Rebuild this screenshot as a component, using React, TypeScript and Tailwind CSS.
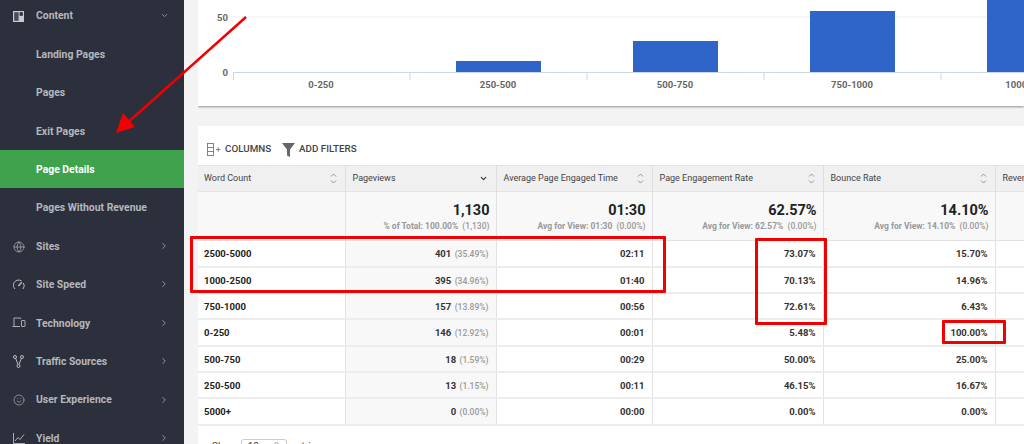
import React from "react";
import { ChevronDown, ChevronRight, Globe, Smile } from "lucide-react";

const FONT = { fontFamily: "Roboto, sans-serif" };

type NavItem = { label: string; icon?: React.ReactNode; open?: boolean; active?: boolean; arrow?: boolean };

function ContentIcon() {
  return (
    <svg width="11" height="11" viewBox="0 0 11 11">
      <rect width="11" height="11" fill="#c9cbd0" />
      <rect x="1.2" y="1.2" width="4.4" height="8.6" fill="#4a4d58" />
      <rect x="6.6" y="1.2" width="3.2" height="3.6" fill="#2c303c" />
    </svg>
  );
}

function GaugeIcon() {
  return (
    <svg width="12" height="11" viewBox="0 0 12 11" fill="none" stroke="#b9bbc1" strokeWidth="1">
      <path d="M2 10A5.2 5.2 0 0 1 8.6 2M10.4 4A5.2 5.2 0 0 1 10 10" />
      <path d="M5.4 7 8.8 3.2" strokeWidth="1.4" />
    </svg>
  );
}

function DevicesIcon() {
  return (
    <svg width="14" height="12" viewBox="0 0 14 12" fill="none" stroke="#b9bbc1" strokeWidth="0.9">
      <path d="M8.5 2V1H2v8M0.5 9.5H8" />
      <rect x="9.5" y="3.5" width="3.5" height="6" rx="0.5" />
    </svg>
  );
}

function ForkIcon() {
  return (
    <svg width="11" height="13" viewBox="0 0 11 13" fill="none" stroke="#b9bbc1" strokeWidth="1">
      <circle cx="2" cy="2" r="1.5" />
      <circle cx="9" cy="2" r="1.5" />
      <circle cx="5.5" cy="11" r="1.5" />
      <path d="M2.7 3.4 5 9.5M8.3 3.4 6 9.5" />
    </svg>
  );
}

function YieldIcon() {
  return (
    <svg width="12" height="11" viewBox="0 0 12 11" fill="none" stroke="#b9bbc1" strokeWidth="0.9">
      <path d="M0.5 0v10.5H12" />
      <path d="M2 8 5 4.5 7 6.5 11 1.5" />
    </svg>
  );
}

const nav: NavItem[] = [
  { label: "Content", icon: <ContentIcon />, open: true, arrow: true },
  { label: "Landing Pages" },
  { label: "Pages" },
  { label: "Exit Pages" },
  { label: "Page Details", active: true },
  { label: "Pages Without Revenue" },
  { label: "Sites", icon: <Globe size={12} strokeWidth={1.3} />, arrow: true },
  { label: "Site Speed", icon: <GaugeIcon />, arrow: true },
  { label: "Technology", icon: <DevicesIcon />, arrow: true },
  { label: "Traffic Sources", icon: <ForkIcon />, arrow: true },
  { label: "User Experience", icon: <Smile size={12} strokeWidth={1.3} />, arrow: true },
  { label: "Yield", icon: <YieldIcon />, arrow: true },
];

type Row = { name: string; views: string; pct: string; time: string; rate: string; bounce: string };

const rows: Row[] = [
  { name: "2500-5000", views: "401", pct: "(35.49%)", time: "02:11", rate: "73.07%", bounce: "15.70%" },
  { name: "1000-2500", views: "395", pct: "(34.96%)", time: "01:40", rate: "70.13%", bounce: "14.96%" },
  { name: "750-1000", views: "157", pct: "(13.89%)", time: "00:56", rate: "72.61%", bounce: "6.43%" },
  { name: "0-250", views: "146", pct: "(12.92%)", time: "00:01", rate: "5.48%", bounce: "100.00%" },
  { name: "500-750", views: "18", pct: "(1.59%)", time: "00:29", rate: "50.00%", bounce: "25.00%" },
  { name: "250-500", views: "13", pct: "(1.15%)", time: "00:11", rate: "46.15%", bounce: "16.67%" },
  { name: "5000+", views: "0", pct: "(0.00%)", time: "00:00", rate: "0.00%", bounce: "0.00%" },
];

function SortIcon() {
  return (
    <svg width="7" height="11" viewBox="0 0 7 11" fill="none" stroke="#8a8a8a" strokeWidth="0.9" className="shrink-0">
      <path d="M1 3.5 3.5 1 6 3.5M1 7.5 3.5 10 6 7.5" />
    </svg>
  );
}

function Sidebar() {
  return (
    <aside className="w-[184px] shrink-0 bg-[#2c303c]">
      <div className="-mt-[4px]">
        {nav.map((item) => (
          <div
            key={item.label}
            className={`flex h-[38.4px] items-center text-[10.4px] font-bold ${
              item.active ? "bg-[#3fa34d] text-white" : "text-[#b5b7bc]"
            }`}
          >
            <span className="flex w-[36px] shrink-0 items-center justify-center pl-[1px] pt-[2px] text-[#b9bbc1]">{item.icon}</span>
            <span className="flex-1 pt-[2px]">{item.label}</span>
            {item.arrow &&
              (item.open ? (
                <ChevronDown size={9} className="mr-[15px] mt-[1px] text-[#a5a7ad]" />
              ) : (
                <ChevronRight size={10} className="mr-[15px] mt-[1px] text-[#a5a7ad]" />
              ))}
          </div>
        ))}
      </div>
    </aside>
  );
}

function ChartCard() {
  const bars = [
    { x: 258, y: 61, h: 11, w: 85 },
    { x: 435, y: 41, h: 31, w: 85 },
    { x: 612, y: 11, h: 61, w: 85 },
    { x: 789, y: 0, h: 72, w: 85 },
  ];
  const labels = ["0-250", "250-500", "500-750", "750-1000", "1000-2500"];
  return (
    <div className="h-[106px] bg-white shadow-[0_1px_2px_rgba(0,0,0,0.4)]">
      <svg width="826" height="106" style={FONT} className="block">
        <line x1="35" x2="826" y1="17" y2="17" stroke="#e8ecf3" />
        {bars.map((b) => (
          <rect key={b.x} x={b.x} y={b.y} width={b.w} height={b.h} fill="#2f65c9" />
        ))}
        <path d="M35 72.5H826M35.5 72v8M212 72v8M389 72v8M566 72v8M743 72v8" stroke="#ccd6eb" fill="none" />
        <text x="30" y="20.5" textAnchor="end" fontSize="9.5" fontWeight="700" fill="#666">50</text>
        <text x="30" y="75.5" textAnchor="end" fontSize="9.5" fontWeight="700" fill="#666">0</text>
        {labels.map((l, i) => (
          <text key={l} x={123 + i * 177} y="87.5" textAnchor="middle" fontSize="9.5" fontWeight="700" fill="#666">{l}</text>
        ))}
      </svg>
    </div>
  );
}

function HeaderCell({ label, desc, first }: { label: string; desc?: boolean; first?: boolean }) {
  return (
    <th className={`border-r border-[#dedede] pr-[7px] text-left font-normal ${first ? "pl-[6px]" : "pl-[7px]"}`}>
      <div className="flex items-center justify-between whitespace-nowrap pr-[1px]">
        <span>{label}</span>
        {desc ? <ChevronDown size={9} strokeWidth={3} className="text-[#333]" /> : <SortIcon />}
      </div>
    </th>
  );
}

function TotalCell({ big, sub, paren }: { big: string; sub: string; paren: string }) {
  return (
    <td className="border-r border-[#e2e2e2] px-[6px] pt-[3px] text-right align-middle">
      <div className="text-[14.5px] font-bold leading-[18px] text-[#222]">{big}</div>
      <div className="whitespace-nowrap text-[8.5px] font-bold leading-[13px] text-[#999]">
        {sub} <span className="ml-[2px] font-medium">{paren}</span>
      </div>
    </td>
  );
}

function DataTable() {
  return (
    <div className="mt-[20px] bg-white">
      <div className="flex h-[39px] items-center pl-[9px] pt-[8px] text-[9.8px] font-medium text-[#444]">
        <svg width="14" height="13" viewBox="0 0 14 13" fill="none" stroke="#777" strokeWidth="0.9">
          <rect x="0.5" y="0.5" width="6" height="12" />
          <path d="M0.5 4.5h6M0.5 8.5h6M9 6.5h4.5M11.2 4.3v4.4" />
        </svg>
        <span className="ml-[4px]">COLUMNS</span>
        <svg width="13" height="14" viewBox="0 0 13 14" fill="#666" className="ml-[11px]">
          <path d="M0 0h13L8 6.5V14L5 12.5v-6z" />
        </svg>
        <span className="ml-[4px]">ADD FILTERS</span>
      </div>
      <table className="w-[900px] table-fixed border-collapse text-[#333]">
        <colgroup>
          <col className="w-[147px]" />
          <col className="w-[151px]" />
          <col className="w-[156px]" />
          <col className="w-[171px]" />
          <col className="w-[172px]" />
          <col />
        </colgroup>
        <thead>
          <tr className="h-[26px] border-y border-[#e4e4e4] bg-[#f0f0f0] text-[9px] text-[#444]">
            <HeaderCell label="Word Count" first />
            <HeaderCell label="Pageviews" desc />
            <HeaderCell label="Average Page Engaged Time" />
            <HeaderCell label="Page Engagement Rate" />
            <HeaderCell label="Bounce Rate" />
            <th className="px-[7px] text-left font-normal">Revenue</th>
          </tr>
        </thead>
        <tbody>
          <tr className="h-[49px] border-b border-[#e2e2e2] bg-[#f8f8f8]">
            <td className="border-r border-[#e2e2e2]" />
            <TotalCell big="1,130" sub="% of Total: 100.00%" paren="(1,130)" />
            <TotalCell big="01:30" sub="Avg for View: 01:30" paren="(0.00%)" />
            <TotalCell big="62.57%" sub="Avg for View: 62.57%" paren="(0.00%)" />
            <TotalCell big="14.10%" sub="Avg for View: 14.10%" paren="(0.00%)" />
            <td />
          </tr>
          {rows.map((r) => (
            <tr key={r.name} className="h-[26.3px] border-b-2 border-[#ececec] text-[9.5px] font-bold [&>td]:pt-[2px]">
              <td className="border-r border-[#e2e2e2] pl-[6px] pr-[7px] text-[#222]">{r.name}</td>
              <td className="border-r border-[#e2e2e2] bg-[#f8f8f8] px-[7px] text-right">
                {r.views} <span className="ml-[1px] text-[8.5px] font-medium text-[#999]">{r.pct}</span>
              </td>
              <td className="border-r border-[#e2e2e2] px-[7px] text-right">{r.time}</td>
              <td className="border-r border-[#e2e2e2] px-[7px] text-right">{r.rate}</td>
              <td className="border-r border-[#e2e2e2] px-[7px] text-right">{r.bounce}</td>
              <td />
            </tr>
          ))}
        </tbody>
      </table>
      <div className="flex items-start pl-[14px] pt-[13px] text-[10px] text-[#444]">
        <span>Show</span>
        <span className="mx-[4px] flex h-[16px] w-[46px] items-center justify-between rounded-[3px] border border-[#ccc] px-[6px]">
          10 <SortIcon />
        </span>
        <span>entries</span>
      </div>
    </div>
  );
}

function Annotations() {
  return (
    <>
      <div className="absolute left-[190px] top-[236px] h-[57px] w-[476px] rounded-[1px] border-[3px] border-[#f00000]" />
      <div className="absolute left-[755px] top-[238px] h-[87px] w-[72px] rounded-[1px] border-[3px] border-[#f00000]" />
      <div className="absolute left-[942px] top-[320px] h-[24px] w-[64px] rounded-[1px] border-[3px] border-[#f00000]" />
      <svg width="260" height="140" className="absolute left-0 top-0">
        <line x1="246" y1="17" x2="125" y2="125" stroke="#f00000" strokeWidth="2.4" />
        <polygon points="116,133 123,113 135,127" fill="#f00000" />
      </svg>
    </>
  );
}

export default function App() {
  return (
    <div className="relative flex h-[444px] w-[1024px] overflow-hidden bg-[#f3f3f3]" style={FONT}>
      <Sidebar />
      <main className="ml-[14px] min-w-0 flex-1 overflow-hidden">
        <ChartCard />
        <DataTable />
      </main>
      <Annotations />
    </div>
  );
}
